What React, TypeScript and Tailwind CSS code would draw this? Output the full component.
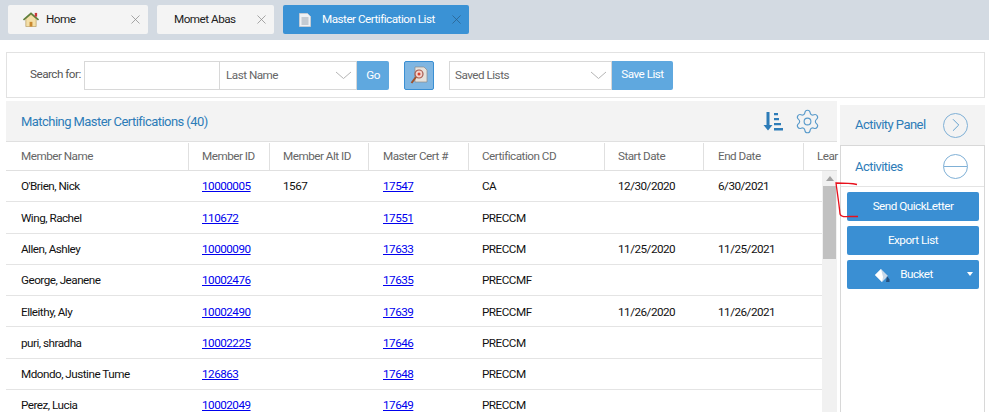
import { ChevronRight, Settings, X } from "lucide-react";

const rows = [
  { name: "O'Brien, Nick", id: "10000005", alt: "1567", cert: "17547", cd: "CA", start: "12/30/2020", end: "6/30/2021" },
  { name: "Wing, Rachel", id: "110672", alt: "", cert: "17551", cd: "PRECCM", start: "", end: "" },
  { name: "Allen, Ashley", id: "10000090", alt: "", cert: "17633", cd: "PRECCM", start: "11/25/2020", end: "11/25/2021" },
  { name: "George, Jeanene", id: "10002476", alt: "", cert: "17635", cd: "PRECCMF", start: "", end: "" },
  { name: "Elleithy, Aly", id: "10002490", alt: "", cert: "17639", cd: "PRECCMF", start: "11/26/2020", end: "11/26/2021" },
  { name: "puri, shradha", id: "10002225", alt: "", cert: "17646", cd: "PRECCM", start: "", end: "" },
  { name: "Mdondo, Justine Tume", id: "126863", alt: "", cert: "17648", cd: "PRECCM", start: "", end: "" },
  { name: "Perez, Lucia", id: "10002049", alt: "", cert: "17649", cd: "PRECCM", start: "", end: "" },
];

const cols = [
  { label: "Member Name", w: "w-[182px] pl-[14px]" },
  { label: "Member ID", w: "w-[81px] pl-[13px]" },
  { label: "Member Alt ID", w: "w-[99px] pl-[13px]" },
  { label: "Master Cert #", w: "w-[100px] pl-[14px]" },
  { label: "Certification CD", w: "w-[136px] pl-[13px]" },
  { label: "Start Date", w: "w-[99px] pl-[13px]" },
  { label: "End Date", w: "w-[100px] pl-[14px]" },
  { label: "Lear", w: "w-[33px] pl-[13px]" },
];

function HomeIcon() {
  return (
    <svg width="17" height="15" viewBox="0 0 17 15">
      <path d="M3 7v8h11V7L8.500 2z" fill="#f3dfa8" stroke="#a88a4a" strokeWidth="0.6" />
      <path d="M7 10h3v5H7z" fill="#c9882f" />
      <path d="M0.500 8L8.500 1l8 7" fill="none" stroke="#5f7f3a" strokeWidth="1.800" />
      <rect x="12.500" y="0.500" width="2.500" height="4" fill="#c8383a" />
    </svg>
  );
}

function DocIcon() {
  return (
    <svg width="12" height="14" viewBox="0 0 12 14">
      <path d="M0.500 0.500h8l3 3v10h-11z" fill="#eef1f4" stroke="#c4ccd4" />
      <path d="M2.500 5h7M2.500 7h7M2.500 9h7M2.500 11h7" stroke="#9aa5b0" />
    </svg>
  );
}

function SearchDocIcon() {
  return (
    <svg width="18" height="19" viewBox="0 0 18 19">
      <path d="M5 1h9l3 3v12H5z" fill="#e6e2dc" stroke="#8d8a86" strokeWidth="0.7" />
      <circle cx="9" cy="8" r="4" fill="#f4d4cc" stroke="#a55a50" strokeWidth="1.200" />
      <circle cx="9" cy="8" r="1.500" fill="#d8402f" />
      <path d="M6 11l-4.500 6" stroke="#a0522d" strokeWidth="2" />
    </svg>
  );
}

function BucketIcon() {
  return (
    <svg width="17" height="15" viewBox="0 0 17 15">
      <path d="M7 1l7 7-6 6-7-7z" fill="#c9d8e8" />
      <path d="M7 1l2 8-1 5-7-7z" fill="#ffffff" />
      <path d="M13 8l2.500 3.500V14H12z" fill="#26517f" />
    </svg>
  );
}

function SortIcon() {
  return (
    <svg width="20" height="20" viewBox="0 0 20 20" fill="#2d7cb8">
      <path d="M3.500 1h3v13h3l-4.500 5.500L0.500 14h3z" />
      <path d="M11 2h4v2.200h-4zM11 7h5v2.200h-5zM11 12h7v2.200h-7zM11 17h9v2.400h-9z" />
    </svg>
  );
}

function SelectArrow() {
  return (
    <svg width="17" height="9" viewBox="0 0 17 9" fill="none" stroke="#b5b5b5" strokeWidth="1">
      <path d="M1 1l7.500 6.500L16 1" />
    </svg>
  );
}

function Tab({ label, active, width, icon }: { label: string; active?: boolean; width: string; icon?: React.ReactNode }) {
  return (
    <div className={`relative flex h-[29px] items-center whitespace-nowrap rounded-[2px] ${width} ${active ? "bg-[#3a92d5] text-white" : "bg-[#f4f4f4] text-[#222]"}`}>
      {icon ? <span className={`flex w-[16px] justify-center ${active ? "ml-[14px] mr-[9px]" : "ml-[15px] mr-[7px]"}`}>{icon}</span> : <span className="ml-[17px]" />}
      <span className="pt-px">{label}</span>
      <X size={15} strokeWidth={1.200} className={`absolute right-[5px] top-[7px] ${active ? "text-[#2a5f8a]" : "text-[#8b8b8b]"}`} />
    </div>
  );
}

function ActionButton({ children, className = "" }: { children: React.ReactNode; className?: string }) {
  return (
    <div className={`relative flex h-[29px] w-[132px] items-center justify-center rounded-[2px] bg-[#3a8fd3] pt-px text-white ${className}`}>
      {children}
    </div>
  );
}

export default function App() {
  return (
    <div className="relative h-[412px] w-[989px] overflow-hidden bg-white font-['Roboto',sans-serif] text-[11.700px] tracking-[-0.5px]">
      <div className="flex h-[40px] items-start gap-[9px] bg-[#d3dae2] pl-[8px] pt-[5px]">
        <Tab label="Home" width="w-[140px]" icon={<HomeIcon />} />
        <Tab label="Momet Abas" width="w-[117px]" />
        <Tab label="Master Certification List" width="w-[186px]" active icon={<DocIcon />} />
      </div>

      <div className="ml-[6px] mr-[4px] mt-[12px] flex h-[46px] items-center border border-[#e2e2e2] pl-[23px]">
        <span className="mr-[4px] w-[50px] shrink-0 whitespace-nowrap text-[#555]">Search for:</span>
        <div className="flex h-[29px] w-[305px] rounded-[2px]">
          <div className="w-[136px] border border-[#d8d8d8]" />
          <div className="flex w-[137px] items-center justify-between border-y border-r border-[#d8d8d8] pl-[6px] pr-[4px] pt-px text-[#666]">
            Last Name
            <SelectArrow />
          </div>
          <div className="flex w-[32px] items-center justify-center rounded-r-[2px] bg-[#5fa8df] pt-px text-white">Go</div>
        </div>
        <div className="ml-[15px] flex h-[29px] w-[30px] items-center justify-center rounded-[2px] border border-[#3a8fd3] bg-[#7fb6e2]">
          <SearchDocIcon />
        </div>
        <div className="ml-[15px] flex h-[29px] w-[163px] items-center justify-between border border-[#d8d8d8] pl-[5px] pr-[4px] pt-px text-[#666]">
          Saved Lists
          <SelectArrow />
        </div>
        <div className="flex h-[29px] w-[61px] items-center justify-center rounded-r-[2px] bg-[#5fa8df] text-white">Save List</div>
      </div>

      <div className="flex items-start">
        <div className="ml-[6px] mt-[3px] w-[831px]">
          <div className="flex h-[40px] items-center justify-between bg-[#f3f3f3] pl-[15px] pr-[16px]">
            <span className="pt-px text-[13px] tracking-[-0.55px] text-[#2d7cb8]">Matching Master Certifications (40)</span>
            <div className="flex items-center gap-[11px]">
              <SortIcon />
              <Settings size={27} strokeWidth={1} className="text-[#5a9bcb]" />
            </div>
          </div>
          <div className="flex h-[30px] items-center border-y border-[#e0e0e0] pl-px pt-px text-[#666]">
            {cols.map((c) => (
              <div key={c.label} className={`flex h-full shrink-0 items-center whitespace-nowrap border-r border-[#e0e0e0] last:border-r-0 ${c.w}`}>
                {c.label}
              </div>
            ))}
          </div>
          <div className="relative">
            {rows.map((r) => (
              <div key={r.cert} className="flex h-[31.300px] items-center border-b border-[#e4e4e4] pl-px pt-[2px] text-[#111]">
                <div className="w-[182px] shrink-0 pl-[14px]">{r.name}</div>
                <div className="w-[81px] shrink-0 pl-[13px]"><a href="#" className="text-[#0000ee] underline">{r.id}</a></div>
                <div className="w-[99px] shrink-0 pl-[13px]">{r.alt}</div>
                <div className="w-[100px] shrink-0 pl-[14px]"><a href="#" className="text-[#0000ee] underline">{r.cert}</a></div>
                <div className="w-[136px] shrink-0 pl-[13px]">{r.cd}</div>
                <div className="w-[99px] shrink-0 pl-[13px]">{r.start}</div>
                <div className="w-[100px] shrink-0 pl-[14px]">{r.end}</div>
              </div>
            ))}
            <div className="absolute right-0 top-0 flex h-full w-[15px] flex-col items-center bg-[#f1f1f1]">
              <div className="mt-[5px] h-0 w-0 border-x-[4px] border-b-[5px] border-x-transparent border-b-[#a3a3a3]" />
              <div className="mt-[5px] h-[73px] w-[13px] bg-[#c1c1c1]" />
            </div>
          </div>
        </div>

        <div className="ml-[3px] mt-[7px] w-[145px]">
          <div className="flex h-[40px] items-center justify-between bg-[#f3f3f3] pl-[15px] pr-[17px]">
            <span className="whitespace-nowrap text-[13px] tracking-[-0.55px] text-[#2d7cb8]">Activity Panel</span>
            <span className="flex h-[25px] w-[25px] items-center justify-center rounded-full border border-[#7fb0d6]">
              <ChevronRight size={22} strokeWidth={1} className="text-[#5a9bcb]" />
            </span>
          </div>
          <div className="h-[270px] border-x border-t border-[#d8d8d8]">
            <div className="flex h-[41px] items-center justify-between border-b border-[#e4e4e4] pl-[14px] pr-[16px]">
              <span className="pt-px text-[13px] tracking-[-0.55px] text-[#2d7cb8]">Activities</span>
              <span className="flex h-[25px] w-[25px] items-center justify-center rounded-full border border-[#7fb0d6]">
                <span className="h-px w-full bg-[#7fb0d6]" />
              </span>
            </div>
            <div className="flex flex-col gap-[5px] pl-[6px] pt-[5px]">
              <ActionButton>Send QuickLetter</ActionButton>
              <ActionButton>Export List</ActionButton>
              <ActionButton className="pr-[19px]">
                <span className="mr-[9px]"><BucketIcon /></span>
                Bucket
                <span className="absolute right-[6px] top-[12px] h-0 w-0 border-x-[3px] border-t-[4px] border-x-transparent border-t-white" />
              </ActionButton>
            </div>
          </div>
        </div>
      </div>

      <svg className="absolute left-[830px] top-[180px]" width="34" height="46" viewBox="0 0 34 46" fill="none">
        <path d="M27 4.500C20 3 12 3 6 3c1 8 3 20 4 31 1 3 5 3 9 2.500h9" stroke="#e8101c" strokeWidth="1.300" />
      </svg>
    </div>
  );
}
